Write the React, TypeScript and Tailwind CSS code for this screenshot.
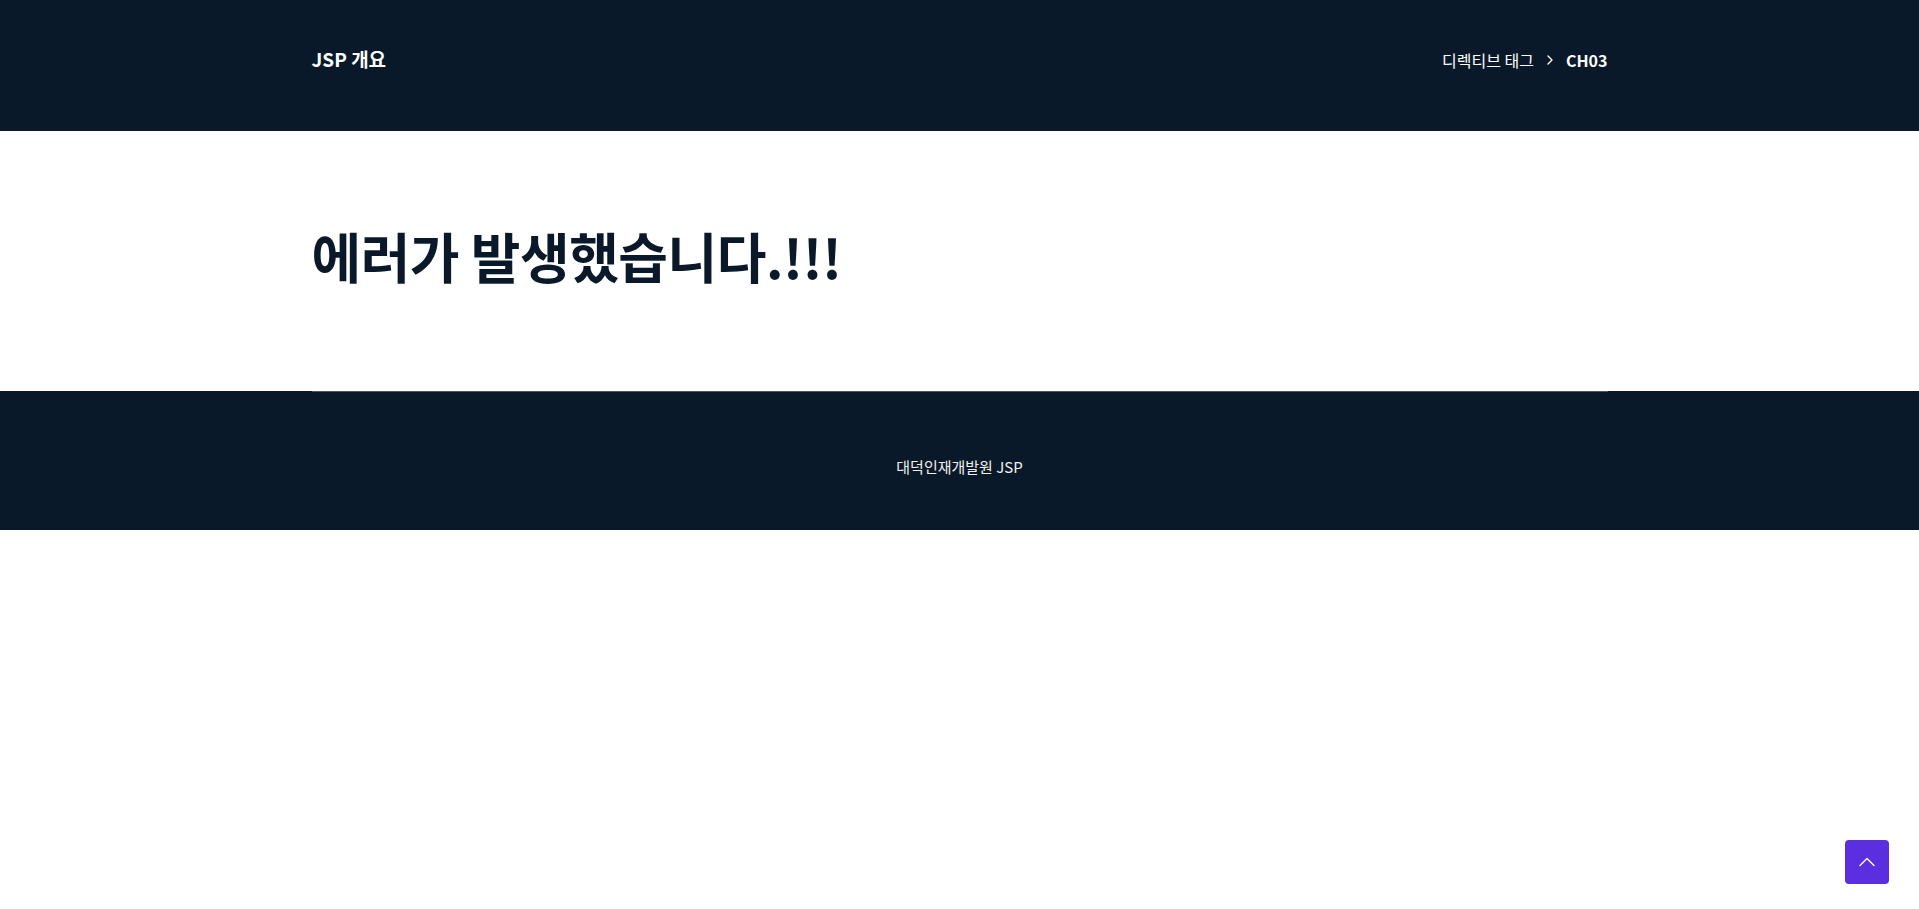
import { ChevronRight, ChevronUp } from "lucide-react";

const font = "font-['Noto_Sans_CJK_KR','Noto_Sans',sans-serif]";

export default function App() {
  return (
    <div className={`min-h-[909px] bg-white ${font}`}>
      <header className="h-[131px] bg-[#0a1929]">
        <div className="mx-auto flex h-full w-[1320px] items-center justify-between px-3 pb-3">
          <h1 className="text-[19px] font-bold text-white">JSP 개요</h1>
          <nav className="flex items-center text-[16px] text-white">
            <span>디렉티브 태그</span>
            <ChevronRight className="mx-2 h-4 w-4" strokeWidth={2} />
            <span className="font-bold">CH03</span>
          </nav>
        </div>
      </header>

      <main className="h-[260px]">
        <div className="mx-auto flex h-full w-[1320px] items-center px-3 pb-3">
          <h2 className="text-[54px] font-bold tracking-[-0.5px] text-[#0a1929]">
            에러가 발생했습니다.!!!
          </h2>
        </div>
      </main>

      <footer className="h-[139px] bg-[#0a1929]">
        <div className="mx-auto h-full w-[1320px] px-3">
          <div className="flex h-full items-center justify-center border-t border-[#4b5563] pt-3">
            <p className="text-[15px] text-[#f3f1ec]">대덕인재개발원 JSP</p>
          </div>
        </div>
      </footer>

      <button className="fixed bottom-[25px] right-[30px] flex h-11 w-11 items-center justify-center rounded-[4px] bg-[#5b2fe0] text-white">
        <ChevronUp className="h-[28px] w-[28px]" strokeWidth={1.2} />
      </button>
    </div>
  );
}
